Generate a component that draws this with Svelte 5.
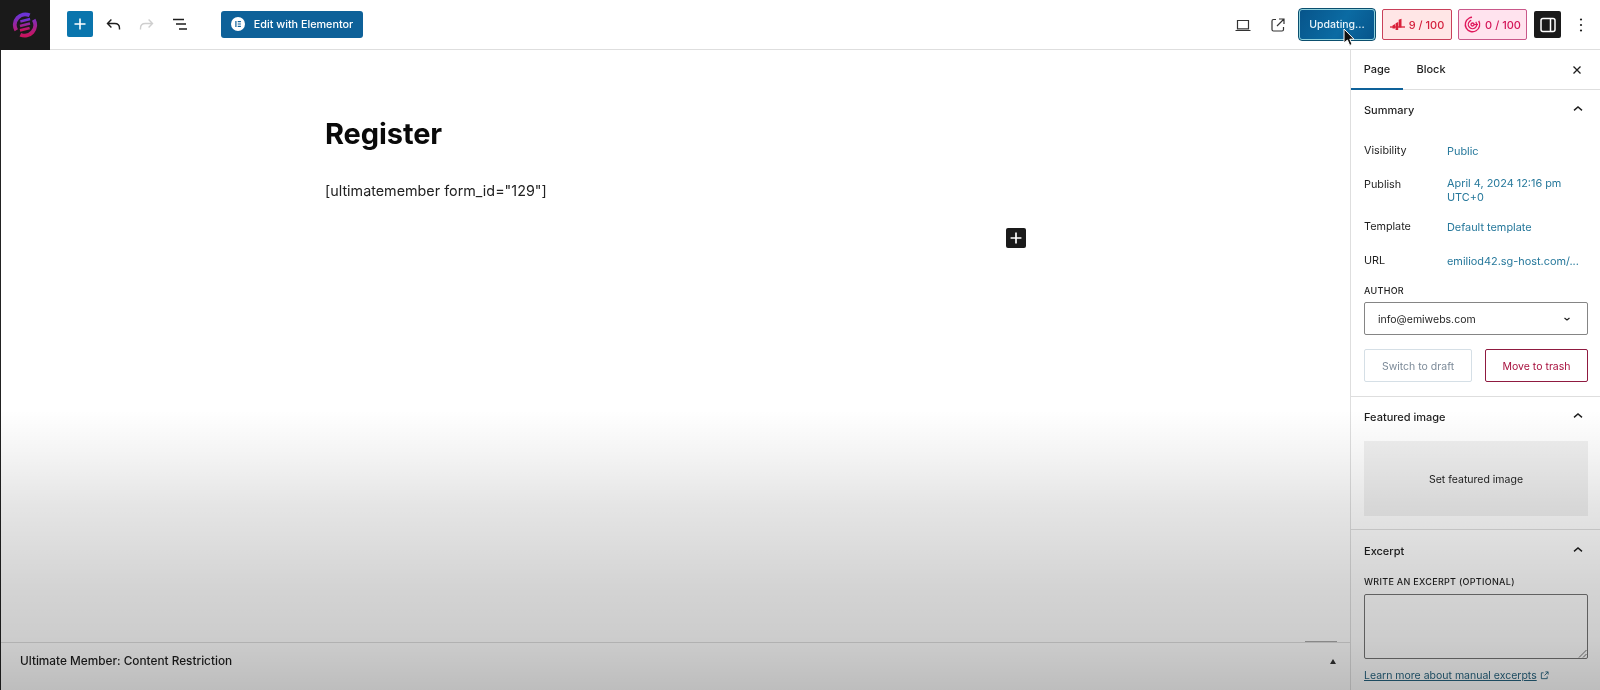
<script>
  const rows = [
    { label: 'Visibility', value: ['Public'] },
    { label: 'Publish', value: ['April 4, 2024 12:16 pm', 'UTC+0'] },
    { label: 'Template', value: ['Default template'] },
    { label: 'URL', value: ['emiliod42.sg-host.com/...'] }
  ];
</script>

{#snippet chevron()}
  <svg class="chev" width="24" height="24" viewBox="0 0 24 24"><path d="M8 12.4 12 9l4 3.4" fill="none" stroke="#1e1e1e" stroke-width="1.4"/></svg>
{/snippet}

<div class="app">
  <header class="top">
    <div class="logo">
      <svg width="26" height="26" viewBox="0 0 28 28">
        <defs>
          <linearGradient id="lg" x1="0" y1="0" x2="0" y2="1">
            <stop offset="0" stop-color="#6a34d8"/>
            <stop offset="1" stop-color="#c8145f"/>
          </linearGradient>
        </defs>
        <path d="M19 3.6A11.3 11.3 0 0 0 4.6 19.6M9 24.4A11.3 11.3 0 0 0 23.4 8.4" fill="none" stroke="url(#lg)" stroke-width="4.2"/>
        <path d="M9 10.2 19.5 7.6M8.6 15 19.4 12.4M8.6 19.8 19 17.2" fill="none" stroke="url(#lg)" stroke-width="2.8"/>
      </svg>
    </div>
    <div class="tools">
      <button class="plus" aria-label="Add block">
        <svg width="24" height="24" viewBox="0 0 24 24"><path d="M11.2 6.5h1.6v4.7h4.7v1.6h-4.7v4.7h-1.6v-4.7H6.5v-1.6h4.7z" fill="#fff"/></svg>
      </button>
      <button class="icon" aria-label="Undo">
        <svg width="24" height="24" viewBox="0 0 24 24"><path d="M18.5 17.5v-1.2c0-3-2-4.8-4.8-4.8H6.8M10.4 7.6 6.5 11.5l3.9 3.9" fill="none" stroke="#1e1e1e" stroke-width="1.4"/></svg>
      </button>
      <button class="icon redo" aria-label="Redo">
        <svg width="24" height="24" viewBox="0 0 24 24"><path d="M5.5 17.5v-1.2c0-3 2-4.8 4.8-4.8h6.9M13.6 7.6l3.9 3.9-3.9 3.9" fill="none" stroke="#cfcfcf" stroke-width="1.4"/></svg>
      </button>
      <button class="icon" aria-label="List view">
        <svg width="24" height="24" viewBox="0 0 24 24"><path d="M5 7.5h11M8 12h10M11 17h8" fill="none" stroke="#1e1e1e" stroke-width="1.5"/></svg>
      </button>
      <button class="elementor">
        <span class="e-badge">
          <svg width="14" height="14" viewBox="0 0 15 15"><circle cx="7.5" cy="7.5" r="7.5" fill="#fff"/><path d="M4.6 4.3h1.3v6.4H4.6zM7.2 4.3h3.4v1.3H7.2zM7.2 6.85h3.4v1.3H7.2zM7.2 9.4h3.4v1.3H7.2z" fill="#0e6199"/></svg>
        </span>
        Edit with Elementor
      </button>
    </div>
    <div class="actions">
      <button class="icon a-laptop" aria-label="View">
        <svg width="24" height="24" viewBox="0 0 24 24"><path d="M6.5 7.5h11v8.3h-11zM4.5 17.5h15" fill="none" stroke="#333" stroke-width="1.2"/></svg>
      </button>
      <button class="icon a-ext" aria-label="View page">
        <svg width="24" height="24" viewBox="0 0 24 24"><path d="M10 6.5H7.5a1.5 1.5 0 0 0-1.5 1.5v8.5A1.5 1.5 0 0 0 7.5 18H16a1.5 1.5 0 0 0 1.5-1.5V14M11 13l6.5-6.5M13 6h5v5" fill="none" stroke="#333" stroke-width="1.2"/></svg>
      </button>
      <button class="update">Updating...</button>
      <button class="score red">
        <svg width="15" height="13" viewBox="0 0 15 13"><path d="M0 9h15" stroke="#d9213a" stroke-width="1.3"/><path d="M2.5 10.5V7.5l2.6-1.6v4.6zM5.6 12V5.2L8.2 4v8zM8.7 9.5V1.8L11.5.8v8.7z" fill="#d9213a"/></svg>
        9 / 100
      </button>
      <button class="score pink">
        <svg width="17" height="17" viewBox="0 0 17 17"><g fill="none" stroke="#e0185c"><circle cx="8.5" cy="8.5" r="7.2" stroke-width="1.4" stroke-dasharray="37 8" transform="rotate(-30 8.5 8.5)"/><circle cx="8.5" cy="8.5" r="4.2" stroke-width="1.3" stroke-dasharray="21 5.4" transform="rotate(-40 8.5 8.5)"/><circle cx="8.5" cy="8.5" r="1.5" stroke-width="1.3"/><path d="M10 8.5h4" stroke-width="1.3"/></g></svg>
        0 / 100
      </button>
      <button class="toggle" aria-label="Settings">
        <svg width="24" height="24" viewBox="0 0 24 24"><rect x="5" y="5.5" width="14" height="13" rx="2" fill="none" stroke="#fff" stroke-width="1.5"/><path d="M14.5 5.5v13" stroke="#fff" stroke-width="1.5"/></svg>
      </button>
      <button class="icon a-more" aria-label="Options">
        <svg width="24" height="24" viewBox="0 0 24 24"><g fill="#1e1e1e"><circle cx="12" cy="6.5" r="1.1"/><circle cx="12" cy="12" r="1.1"/><circle cx="12" cy="17.5" r="1.1"/></g></svg>
      </button>
    </div>
  </header>

  <div class="body">
    <main class="main">
      <div class="canvas">
        <div class="post">
          <h1>Register</h1>
          <p>[ultimatemember form_id="129"]</p>
        </div>
        <button class="inserter" aria-label="Add block">
          <svg width="20" height="20" viewBox="0 0 24 24"><path d="M11 5.5h2V11h5.5v2H13v5.5h-2V13H5.5v-2H11z" fill="#fff"/></svg>
        </button>
      </div>
      <div class="meta">
        <span>Ultimate Member: Content Restriction</span>
        <i class="tri"></i>
        <i class="grip"></i>
      </div>
    </main>

    <aside class="side">
      <div class="tabs">
        <span class="tab active">Page</span>
        <span class="tab">Block</span>
        <svg class="close" width="24" height="24" viewBox="0 0 24 24"><path d="m8.5 8.5 7 7M15.5 8.5l-7 7" fill="none" stroke="#1e1e1e" stroke-width="1.3"/></svg>
      </div>

      <section class="panel summary">
        <div class="phead"><span>Summary</span>{@render chevron()}</div>
        <dl>
          {#each rows as r}
            <div class="row">
              <dt>{r.label}</dt>
              <dd>{#each r.value as v}<span>{v}</span>{/each}</dd>
            </div>
          {/each}
        </dl>
        <div class="caps author">AUTHOR</div>
        <div class="select">
          <span>info@emiwebs.com</span>
          <svg width="16" height="16" viewBox="0 0 16 16"><path d="m5.5 7 2.5 2 2.5-2" fill="none" stroke="#1e1e1e" stroke-width="1.2"/></svg>
        </div>
        <div class="btns">
          <button class="draft">Switch to draft</button>
          <button class="trash">Move to trash</button>
        </div>
      </section>

      <section class="panel featured">
        <div class="phead"><span>Featured image</span>{@render chevron()}</div>
        <div class="placeholder">Set featured image</div>
      </section>

      <section class="panel excerpt">
        <div class="phead"><span>Excerpt</span>{@render chevron()}</div>
        <div class="caps wr">WRITE AN EXCERPT (OPTIONAL)</div>
        <div class="textarea">
          <svg class="grab" width="9" height="9" viewBox="0 0 9 9"><path d="M1 8.5 8.5 1M5 8.5 8.5 5" stroke="#777" stroke-width="1"/></svg>
        </div>
        <div class="learn">
          <span class="lnk">Learn more about manual excerpts</span>
          <svg width="9" height="9" viewBox="0 0 10 10"><path d="M4 2H1.5v6.5H8V6M5 5l4-4M6 1h3v3" fill="none" stroke="#26637f" stroke-width="1"/></svg>
        </div>
      </section>
    </aside>
  </div>

  <div class="fade"></div>
  <svg class="cursor" width="14" height="20" viewBox="0 0 14 20"><path d="M1 1v14l3.4-3 2.3 5.4 2.4-1-2.3-5.2H11z" fill="#111" stroke="#fff" stroke-width="1"/></svg>
</div>

<style>
  :global(body) { margin: 0; background: #fff; }
  .app {
    position: relative;
    width: 1600px;
    height: 690px;
    overflow: hidden;
    background: #fff;
    font-family: Inter, "Liberation Sans", sans-serif;
    font-size: 11px;
    color: #1e1e1e;
    filter: blur(0.5px);
  }
  button {
    font: inherit;
    padding: 0;
    margin: 0;
    border: 0;
    background: none;
    color: inherit;
    display: flex;
    align-items: center;
    justify-content: center;
  }
  .top {
    height: 49px;
    display: flex;
    align-items: center;
    border-bottom: 1px solid #dedede;
  }
  .logo {
    width: 50px;
    height: 50px;
    margin-bottom: -1px;
    background: #1a1a1a;
    display: flex;
    align-items: center;
    justify-content: center;
    flex: none;
  }
  .tools {
    display: flex;
    align-items: center;
    margin-left: 17px;
    margin-top: -1px;
  }
  .plus {
    width: 26px;
    height: 26px;
    background: #0a75ad;
    border-radius: 2px;
  }
  .icon { width: 24px; height: 24px; }
  .plus + .icon { margin-left: 8px; }
  .icon + .icon { margin-left: 9px; }
  .icon.redo { margin-left: 10px; }
  .elementor {
    margin-left: 29px;
    width: 142px;
    height: 27px;
    gap: 9px;
    background: #0e6199;
    color: #fff;
    border-radius: 3px;
    font-size: 10.8px;
    font-weight: 500;
  }
  .e-badge { display: flex; }
  .actions {
    margin-left: auto;
    display: flex;
    align-items: center;
  }
  .a-laptop { margin-right: 11px; }
  .a-ext { margin-left: 0 !important; margin-right: 8px; }
  .update {
    width: 78px;
    height: 33px;
    box-sizing: border-box;
    background: linear-gradient(120deg, #07548a, #0b6ba3 55%, #07548a);
    border: 1.5px solid #0b4f6e;
    outline: 1px solid #8fd0dc;
    outline-offset: -2.5px;
    border-radius: 4px;
    color: #e8f3f9;
    font-size: 10.5px;
    font-weight: 500;
  }
  .score {
    height: 31px;
    box-sizing: border-box;
    border-radius: 2px;
    gap: 4px;
    font-size: 11px;
    font-weight: 500;
  }
  .red {
    width: 70px;
    margin-left: 6px;
    background: #ffe6e6;
    border: 1px solid #c9405a;
    color: #d4213d;
  }
  .pink {
    width: 69px;
    margin-left: 6px;
    background: #ffe3ee;
    border: 1px solid #c9588a;
    color: #d4185a;
  }
  .toggle {
    margin-left: 7px;
    width: 27px;
    height: 27px;
    background: #1a1a1a;
    border-radius: 2px;
  }
  .a-more { margin-left: 8px !important; margin-right: 7px; }

  .body { display: flex; height: 640px; }
  .main {
    flex: 1;
    display: flex;
    flex-direction: column;
    border-left: 1px solid #222;
    min-width: 0;
  }
  .canvas { position: relative; flex: 1; }
  .post { padding: 70px 0 0 324px; }
  h1 {
    margin: 0;
    font-size: 29px;
    line-height: 28px;
    font-weight: 700;
    color: #0a0a0a;
    letter-spacing: -0.1px;
  }
  .post p {
    margin: 34px 0 0;
    font-size: 14.35px;
    line-height: 18px;
    color: #222;
  }
  .inserter {
    position: absolute;
    left: 1005px;
    top: 178px;
    width: 20px;
    height: 20px;
    background: #1a1a1a;
    border-radius: 2px;
  }
  .meta {
    position: relative;
    height: 48px;
    box-sizing: border-box;
    border-top: 1px solid #dedede;
    display: flex;
    align-items: flex-start;
    padding: 11px 14px 0 19px;
    justify-content: space-between;
    font-size: 11.8px;
    line-height: 15px;
    font-weight: 500;
  }
  .tri {
    width: 0;
    height: 0;
    border-left: 3.5px solid transparent;
    border-right: 3.5px solid transparent;
    border-bottom: 5px solid #333;
    margin-top: 5px;
  }
  .grip {
    position: absolute;
    right: 13px;
    top: -2px;
    width: 32px;
    height: 1px;
    background: #aaa;
  }

  .side {
    width: 250px;
    flex: none;
    box-sizing: border-box;
    border-left: 1px solid #dedede;
  }
  .tabs {
    display: flex;
    align-items: center;
    height: 39px;
    border-bottom: 1px solid #dedede;
    position: relative;
    font-size: 11px;
    font-weight: 500;
  }
  .tab { width: 52px; text-align: center; height: 39px; line-height: 39px; box-sizing: border-box; position: relative; }
  .tab + .tab { width: 54px; margin-left: 1px; }
  .tab.active::after {
    content: "";
    position: absolute;
    left: 0;
    right: 0;
    bottom: -1px;
    height: 2px;
    background: #0e6199;
  }
  .close { position: absolute; right: 11px; top: 8px; }
  .panel { padding: 0 12px 0 13px; border-bottom: 1px solid #dedede; }
  .phead {
    display: flex;
    align-items: center;
    justify-content: space-between;
    height: 39px;
    font-size: 11px;
    font-weight: 500;
    margin-right: -1px;
  }
  .chev { margin-right: -1px; }
  dl { margin: 0; padding-top: 5px; }
  .row { display: flex; padding: 10px 0 0; margin-bottom: 8px; line-height: 14px; font-size: 10.8px; }
  .row dt { width: 83px; flex: none; }
  .row:nth-child(2) { margin-bottom: 6px; }
  .row:nth-child(2) dt { padding-top: 2px; }
  .row:nth-child(3) { margin-bottom: 10px; }
  .row dd { margin: 0; color: #26789b; display: flex; flex-direction: column; font-size: 10.9px; }
  .summary { height: 307px; box-sizing: border-box; }
  .caps { font-size: 9px; font-weight: 500; letter-spacing: 0.3px; color: #1e1e1e; }
  .author { margin-top: 17px; }
  .select {
    margin-top: 6px;
    height: 33px;
    box-sizing: border-box;
    border: 1px solid #858585;
    border-radius: 2px;
    display: flex;
    align-items: center;
    justify-content: space-between;
    padding: 1px 12px 0 13px;
    font-size: 10.5px;
  }
  .btns { display: flex; justify-content: space-between; margin-top: 14px; }
  .btns button {
    height: 33px;
    box-sizing: border-box;
    border-radius: 2px;
    padding-top: 1px;
    font-size: 10.5px;
  }
  .draft { width: 108px; border: 1px solid #d5dfe6; color: #7d8b99; }
  .trash { width: 103px; border: 1px solid #8f1a40; color: #a8123f; }

  .featured { height: 133px; box-sizing: border-box; }
  .featured .phead { height: 39px; }
  .placeholder {
    margin-top: 5px;
    height: 75px;
    padding-top: 1px;
    box-sizing: border-box;
    background: #f0f0f0;
    display: flex;
    align-items: center;
    justify-content: center;
    font-size: 10.5px;
  }
  .excerpt { border-bottom: 0; }
  .excerpt .phead { height: 41px; }
  .wr { padding-top: 5px; font-size: 9px; }
  .textarea {
    position: relative;
    margin-top: 7px;
    height: 65px;
    box-sizing: border-box;
    border: 1px solid #757575;
    border-radius: 2px;
  }
  .grab { position: absolute; right: 0; bottom: 0; }
  .learn { margin-top: 10px; display: flex; align-items: center; gap: 3px; font-size: 10.5px; color: #26637f; }
  .lnk { text-decoration: underline; }

  .fade {
    position: absolute;
    inset: 0;
    pointer-events: none;
    background: linear-gradient(to bottom,
      rgba(0,0,0,0) 410px,
      rgba(0,0,0,.04) 450px,
      rgba(0,0,0,.1) 505px,
      rgba(0,0,0,.17) 585px,
      rgba(0,0,0,.2) 640px,
      rgba(0,0,0,.26) 690px);
  }
  .cursor { position: absolute; left: 1343px; top: 28px; }
</style>
